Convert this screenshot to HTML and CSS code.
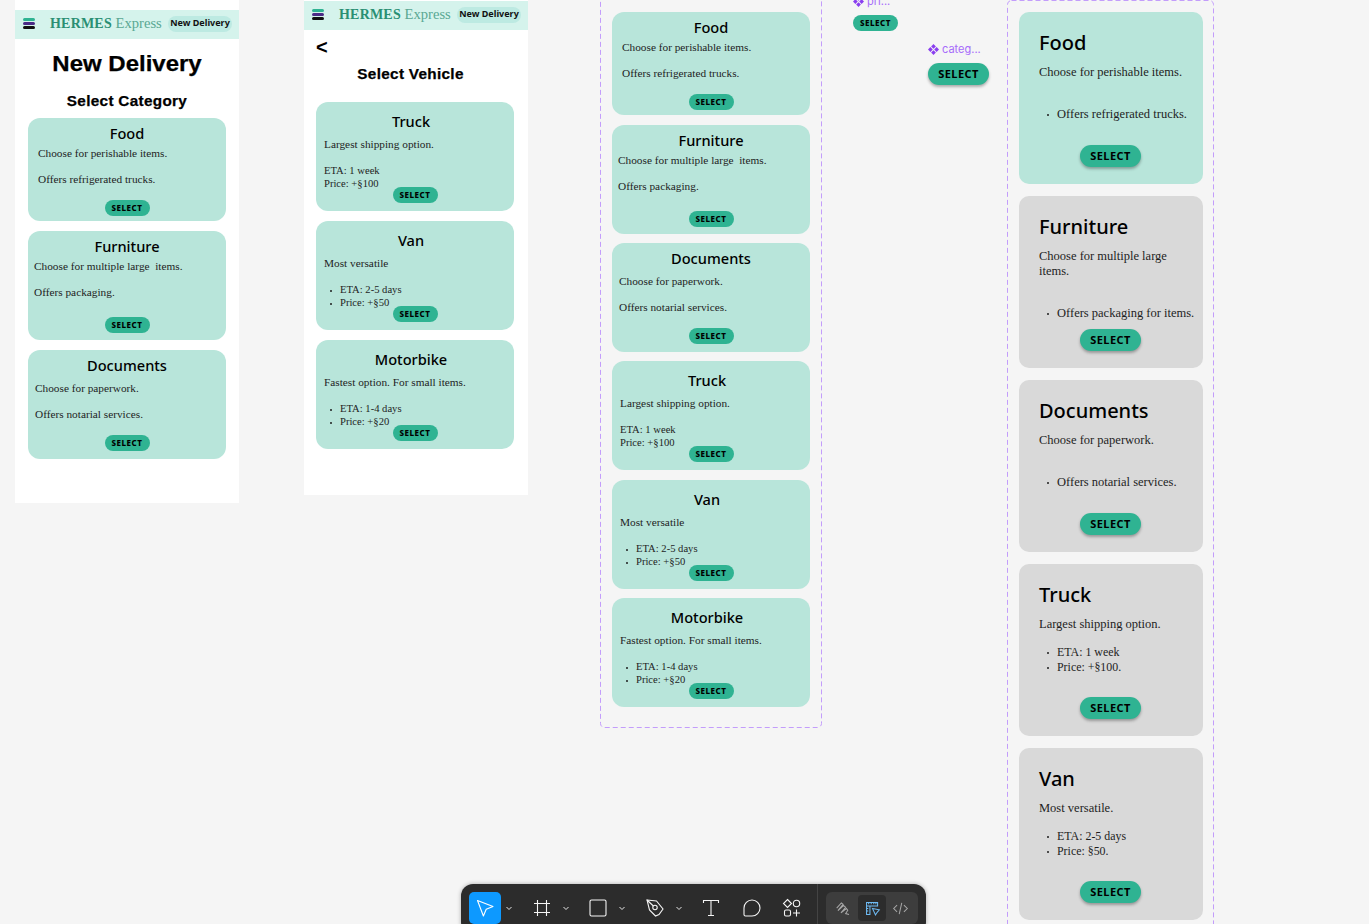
FILE: index.html
```html
<!DOCTYPE html>
<html lang="en">
<head>
    <meta charset="UTF-8">
    <title>Hermes Express - New Delivery</title>
    <link rel="stylesheet" href="styles.css">
</head>
<body>

<div id="canvas">

    <!-- category phone frame -->
    <div class="frame phone phone-category">
        <div class="app-header">
            <span class="burger"><i class="b1"></i><i class="b2"></i><i class="b3"></i></span>
            <span class="logo"><b>HERMES</b> Express</span>
            <span class="crumb">New Delivery</span>
        </div>
        <h1>New Delivery</h1>
        <h2>Select Category</h2>
        <div class="cards">
            <div class="card short">
                <h3>Food</h3>
                <p class="in-10">Choose for perishable items.</p>
                <p class="in-10">Offers refrigerated trucks.</p>
                <button class="select">SELECT</button>
            </div>
            <div class="card">
                <h3>Furniture</h3>
                <p class="in-6">Choose for multiple large &nbsp;items.</p>
                <p class="in-6">Offers packaging.</p>
                <button class="select">SELECT</button>
            </div>
            <div class="card docs">
                <h3>Documents</h3>
                <p class="in-7">Choose for paperwork.</p>
                <p class="in-7">Offers notarial services.</p>
                <button class="select">SELECT</button>
            </div>
        </div>
    </div>

    <!-- vehicle phone frame -->
    <div class="frame phone phone-vehicle">
        <div class="app-header">
            <span class="burger"><i class="b1"></i><i class="b2"></i><i class="b3"></i></span>
            <span class="logo"><b>HERMES</b> Express</span>
            <span class="crumb">New Delivery</span>
        </div>
        <div class="back">&lt;</div>
        <h2>Select Vehicle</h2>
        <div class="cards">
            <div class="card vehicle">
                <h3>Truck</h3>
                <p>Largest shipping option.</p>
                <p>ETA: 1 week<br>Price: +§100</p>
                <button class="select">SELECT</button>
            </div>
            <div class="card vehicle">
                <h3>Van</h3>
                <p>Most versatile</p>
                <ul><li>ETA: 2-5 days</li><li>Price: +§50</li></ul>
                <button class="select">SELECT</button>
            </div>
            <div class="card vehicle">
                <h3>Motorbike</h3>
                <p>Fastest option. For small items.</p>
                <ul><li>ETA: 1-4 days</li><li>Price: +§20</li></ul>
                <button class="select">SELECT</button>
            </div>
        </div>
    </div>

    <!-- component set, small -->
    <div class="frame set set-small">
        <svg class="dash" width="222" height="736"><rect x="0.5" y="0.5" width="221" height="735" rx="4"/></svg>
        <div class="card short">
            <h3>Food</h3>
            <p class="in-10">Choose for perishable items.</p>
            <p class="in-10">Offers refrigerated trucks.</p>
            <button class="select">SELECT</button>
        </div>
        <div class="card">
            <h3>Furniture</h3>
            <p class="in-6">Choose for multiple large &nbsp;items.</p>
            <p class="in-6">Offers packaging.</p>
            <button class="select">SELECT</button>
        </div>
        <div class="card docs">
            <h3>Documents</h3>
            <p class="in-7">Choose for paperwork.</p>
            <p class="in-7">Offers notarial services.</p>
            <button class="select">SELECT</button>
        </div>
        <div class="card vehicle">
            <h3>Truck</h3>
            <p>Largest shipping option.</p>
            <p>ETA: 1 week<br>Price: +§100</p>
            <button class="select">SELECT</button>
        </div>
        <div class="card vehicle">
            <h3>Van</h3>
            <p>Most versatile</p>
            <ul><li>ETA: 2-5 days</li><li>Price: +§50</li></ul>
            <button class="select">SELECT</button>
        </div>
        <div class="card vehicle">
            <h3>Motorbike</h3>
            <p>Fastest option. For small items.</p>
            <ul><li>ETA: 1-4 days</li><li>Price: +§20</li></ul>
            <button class="select">SELECT</button>
        </div>
    </div>

    <!-- loose components -->
    <div class="loose loose-pri">
        <span class="comp-label"><svg class="comp-icon" viewBox="0 0 12 12"><path d="M6 0 8.600 2.600 6 5.200 3.400 2.600ZM2.600 3.400 5.200 6 2.600 8.600 0 6ZM9.400 3.400 12 6 9.400 8.600 6.800 6ZM6 6.800 8.600 9.400 6 12 3.400 9.400Z"/></svg>pri...</span>
        <button class="select">SELECT</button>
    </div>
    <div class="loose loose-categ">
        <span class="comp-label"><svg class="comp-icon" viewBox="0 0 12 12"><path d="M6 0 8.600 2.600 6 5.200 3.400 2.600ZM2.600 3.400 5.200 6 2.600 8.600 0 6ZM9.400 3.400 12 6 9.400 8.600 6.800 6ZM6 6.800 8.600 9.400 6 12 3.400 9.400Z"/></svg>categ...</span>
        <button class="select big">SELECT</button>
    </div>

    <!-- component set, large -->
    <div class="frame set set-large">
        <svg class="dash" width="207" height="970"><rect x="0.5" y="0.5" width="206" height="969" rx="4"/></svg>
        <div class="bigcard teal">
            <h3>Food</h3>
            <p>Choose for perishable items.</p>
            <ul class="far"><li>Offers refrigerated trucks.</li></ul>
            <button class="select big">SELECT</button>
        </div>
        <div class="bigcard">
            <h3>Furniture</h3>
            <p>Choose for multiple large items.</p>
            <ul class="far"><li>Offers packaging for items.</li></ul>
            <button class="select big">SELECT</button>
        </div>
        <div class="bigcard">
            <h3>Documents</h3>
            <p>Choose for paperwork.</p>
            <ul class="far"><li>Offers notarial services.</li></ul>
            <button class="select big">SELECT</button>
        </div>
        <div class="bigcard">
            <h3>Truck</h3>
            <p>Largest shipping option.</p>
            <ul><li>ETA: 1 week</li><li>Price: +§100.</li></ul>
            <button class="select big">SELECT</button>
        </div>
        <div class="bigcard">
            <h3>Van</h3>
            <p>Most versatile.</p>
            <ul><li>ETA: 2-5 days</li><li>Price: §50.</li></ul>
            <button class="select big">SELECT</button>
        </div>
    </div>

    <!-- figma toolbar -->
    <div id="toolbar">
        <div class="tool-group">
            <span class="tool active">
                <svg viewBox="0 0 20 20"><path d="M2.500 2.500 18 8.400 11.200 11.200 8.400 18Z"/></svg>
            </span>
            <span class="chev"><svg viewBox="0 0 8 8"><path d="M1.500 3 4 5.500 6.500 3"/></svg></span>
        </div>
        <div class="tool-group">
            <span class="tool">
                <svg viewBox="0 0 20 20"><path d="M5.500 2V18M14.500 2V18M2 5.500H18M2 14.500H18"/></svg>
            </span>
            <span class="chev"><svg viewBox="0 0 8 8"><path d="M1.500 3 4 5.500 6.500 3"/></svg></span>
        </div>
        <div class="tool-group">
            <span class="tool">
                <svg viewBox="0 0 20 20"><rect x="2" y="2" width="16" height="16" rx="1.500"/></svg>
            </span>
            <span class="chev"><svg viewBox="0 0 8 8"><path d="M1.500 3 4 5.500 6.500 3"/></svg></span>
        </div>
        <div class="tool-group">
            <span class="tool">
                <svg viewBox="0 0 20 20"><path d="M2 2 11.500 3 18 11 14 16.500 10.500 18 4.500 12Z"/><circle cx="10" cy="9.500" r="2.200"/><path d="M2 2 8.400 8"/></svg>
            </span>
            <span class="chev"><svg viewBox="0 0 8 8"><path d="M1.500 3 4 5.500 6.500 3"/></svg></span>
        </div>
        <span class="tool">
            <svg viewBox="0 0 20 20"><path d="M2.500 5V2.500H17.500V5M10 2.500V17.500M7 17.500H13"/></svg>
        </span>
        <span class="tool">
            <svg viewBox="0 0 20 20"><path d="M10 2A8 8 0 1 1 10 18H3.500Q2 18 2 16.500V10A8 8 0 0 1 10 2Z"/></svg>
        </span>
        <span class="tool">
            <svg viewBox="0 0 20 20"><path d="M5.500 1.500 9.500 5.500 5.500 9.500 1.500 5.500Z"/><circle cx="14.500" cy="5.500" r="3.200"/><rect x="2.500" y="12" width="6" height="6" rx="1.500"/><path d="M14.500 11.500V18.500M11 15H18"/></svg>
        </span>
        <div class="tool-sep"></div>
        <div class="mode-group">
            <span class="mode">
                <svg viewBox="0 0 20 20"><path d="M2 9.500 7.500 3.500 9.500 5 3.500 12.500 10 6.500 12.500 8.500 7 15 13.500 10 15 12 12.500 16 16.500 17"/></svg>
            </span>
            <span class="mode on">
                <svg viewBox="0 0 20 20"><path d="M3 3H16V7H7V17H3ZM3 7H7M5.500 3V5M8.500 3V5M11.500 3V5M14 3V5M3 10H5M3 13H5"/><path d="M10 10 18 11.500 15.500 14.500 13.500 17.500Z"/></svg>
            </span>
            <span class="mode">
                <svg viewBox="0 0 20 20"><path d="M6 6 2 10 6 14M14 6 18 10 14 14M11.500 3.500 8.500 16.500"/></svg>
            </span>
        </div>
    </div>

</div>

</body>
</html>
```

FILE: styles.css
```css
* {
    box-sizing: border-box;
}
html, body {
    margin: 0;
    height: 100%;
    overflow: hidden;
}
body {
    background-color: #f5f5f5;
    font-family: "Liberation Serif", serif;
    color: #1e1e1e;
}
#canvas {
    position: relative;
    width: 1369px;
    height: 924px;
    overflow: hidden;
}

/* frames sit at free positions on the canvas */
.frame {
    position: absolute;
}
.phone {
    width: 224px;
    background: #fff;
}
.phone-category {
    left: 15px;
    top: 0;
    height: 503px;
    padding-top: 10px;
}
.phone-vehicle {
    left: 304px;
    top: 0;
    height: 495px;
    padding-top: 1px;
}
.set {
    display: flex;
    flex-direction: column;
}
.dash {
    position: absolute;
    left: 0;
    top: 0;
    pointer-events: none;
}
.dash rect {
    fill: none;
    stroke: #c39dfb;
    stroke-width: 1;
    stroke-dasharray: 5 3;
}
.set-small {
    left: 600px;
    top: -8px;
    width: 222px;
    height: 736px;
    padding: 20px 12px 0;
    gap: 9px;
}
.set-small .short, .set-small .vehicle:nth-of-type(4) {
    margin-bottom: 1px;
}
.set-large {
    left: 1007px;
    top: 0;
    width: 207px;
    height: 970px;
    padding: 12px 11px 0 12px;
    gap: 12px;
}

/* app header */
.app-header {
    height: 29px;
    background: #d5f3ec;
    display: flex;
    align-items: center;
    padding-left: 8px;
}
.burger {
    width: 12px;
    margin-top: -2px;
    display: flex;
    flex-direction: column;
    gap: 1px;
}
.burger i {
    display: block;
    height: 3px;
    border-radius: 2px;
}
.b1 { background: #2fb392; }
.b2 { background: #4b2a85; }
.b3 { background: #111; }
.logo {
    margin-left: 15px;
    margin-top: -3px;
    width: 112px;
    font-size: 14.6px;
    color: #5aa893;
    white-space: nowrap;
}
.logo b {
    font-size: 14px;
    color: #2a8f73;
    letter-spacing: 0.2px;
}
.crumb {
    margin-left: 6px;
    margin-top: -1px;
    width: 64px;
    height: 16px;
    border-radius: 8px;
    background: #bdeae2;
    font: 700 9px/14px "Noto Sans", sans-serif;
    color: #111;
    text-align: center;
    white-space: nowrap;
}

/* headings, the drawn font is wider than anything installed */
h1, h2 {
    margin: 0;
    font-family: "Liberation Sans", sans-serif;
    font-weight: 700;
    color: #000;
    text-align: center;
    white-space: nowrap;
    -webkit-text-stroke: 0.25px #000;
    transform: scaleX(1.09);
}
h1 {
    margin-top: 11px;
    font-size: 22px;
    line-height: 28px;
}
.phone h2 {
    font-size: 14px;
    line-height: 16px;
    letter-spacing: 0.3px;
}
.phone-category h2 {
    margin-top: 15px;
}
.phone-vehicle h2 {
    margin-top: 9px;
    padding-right: 10px;
}
.back {
    margin-top: 7px;
    padding-left: 12px;
    font: 700 20px/20px "Liberation Sans", sans-serif;
    color: #000;
}
.cards {
    display: flex;
    flex-direction: column;
    gap: 10px;
    padding-left: 13px;
}
.phone-category .cards {
    margin-top: 9px;
}
.phone-vehicle .cards {
    margin-top: 20px;
    padding-left: 12px;
}

/* small card */
.card {
    width: 198px;
    height: 109px;
    flex-shrink: 0;
    background: #b8e5da;
    border-radius: 12px;
    padding: 5px 0 7px;
    display: flex;
    flex-direction: column;
}
.card.short {
    height: 103px;
    padding-bottom: 5px;
}
.card.docs {
    padding-bottom: 8px;
}
.card h3 {
    margin: 0 0 4px;
    font: 500 14.6px/20px "Noto Sans", sans-serif;
    color: #000;
    text-align: center;
}
.card.docs h3 {
    margin-bottom: 7px;
}
.card.vehicle {
    padding-top: 9px;
    padding-bottom: 8px;
}
.card.vehicle h3 {
    margin-bottom: 7px;
    padding-right: 8px;
}
.card p, .card ul {
    margin: 0 0 13px;
    padding: 0;
    font-size: 11.3px;
    line-height: 13px;
    white-space: nowrap;
}
.card.vehicle p, .card.vehicle ul {
    margin-left: 8px;
}
.card.vehicle ul, .card.vehicle p:nth-of-type(2) {
    margin-bottom: -6px;
    font-size: 10.6px;
}
.in-10 { padding-left: 10px !important; }
.in-6 { padding-left: 6px !important; }
.in-7 { padding-left: 7px !important; }

.card ul, .bigcard ul {
    list-style: none;
}
.card li {
    padding-left: 16px;
}
li::before {
    content: "";
    display: inline-block;
    width: 2px;
    height: 2px;
    border-radius: 50%;
    background: #1e1e1e;
    vertical-align: middle;
    margin-left: -10px;
    margin-right: 8px;
}

/* buttons */
.select {
    display: block;
    width: 45px;
    height: 16px;
    flex-shrink: 0;
    align-self: center;
    margin-top: auto;
    padding: 0;
    border: none;
    border-radius: 8px;
    background: #2fb392;
    color: #000;
    font: 800 8px/16px "Noto Sans", sans-serif;
    letter-spacing: 0.5px;
}
.select.big {
    width: 61px;
    height: 22px;
    border-radius: 11px;
    font: 700 11px/22px "Noto Sans", sans-serif;
    letter-spacing: 0.4px;
    box-shadow: 0 2px 3px rgba(0, 0, 0, 0.3);
}

/* large card */
.bigcard {
    width: 184px;
    height: 172px;
    flex-shrink: 0;
    background: #d9d9d9;
    border-radius: 10px;
    padding: 16px 0 17px 20px;
    display: flex;
    flex-direction: column;
}
.bigcard.teal {
    background: #b8e5da;
}
.bigcard h3 {
    margin: 0 0 8px;
    font: 500 20px/29px "Noto Sans", sans-serif;
    color: #000;
}
.bigcard p, .bigcard ul {
    margin: 0;
    padding: 0;
    font-size: 12.5px;
    line-height: 15px;
}
.bigcard p {
    padding-right: 20px;
}
.bigcard ul {
    margin-top: 13px;
    font-size: 11.9px;
    white-space: nowrap;
}
.bigcard ul.far {
    margin-top: 27px;
    font-size: 12.5px;
}
.bigcard li {
    padding-left: 18px;
}
.bigcard .select {
    margin-left: -21px;
}

/* loose components */
.loose {
    position: absolute;
}
.loose-pri {
    left: 853px;
    top: -5px;
}
.loose-categ {
    left: 928px;
    top: 42px;
}
.comp-label {
    display: flex;
    align-items: center;
    gap: 3px;
    height: 14px;
    font: 400 11px/14px Inter, sans-serif;
    color: #a66bfb;
}
.loose-pri .comp-label {
    margin-bottom: 6px;
    position: relative;
    top: -1px;
}
.loose-categ .comp-label {
    margin-bottom: 7px;
}
.comp-icon {
    width: 11px;
    height: 11px;
    fill: #8a3ff0;
}

/* toolbar */
#toolbar {
    position: absolute;
    left: 461px;
    top: 884px;
    width: 465px;
    height: 50px;
    border-radius: 12px;
    background: #2c2c2c;
    box-shadow: 0 0 4px rgba(0, 0, 0, 0.3);
    padding: 8px 8px 0;
    display: flex;
    align-items: flex-start;
    gap: 8.6px;
}
.tool-group {
    display: flex;
}
.tool {
    width: 32px;
    height: 32px;
    border-radius: 5px;
    display: flex;
    align-items: center;
    justify-content: center;
}
.tool svg {
    width: 20px;
    height: 20px;
    fill: none;
    stroke: #f5f5f5;
    stroke-width: 1.1;
}
.tool.active {
    background: #0d99ff;
}
.tool.active svg {
    stroke: #fff;
    stroke-linejoin: round;
}
.chev {
    width: 16px;
    height: 32px;
    display: flex;
    align-items: center;
    justify-content: center;
}
.chev svg {
    width: 8px;
    height: 8px;
    fill: none;
    stroke: #e6e6e6;
    stroke-width: 1;
}
.tool-sep {
    width: 1px;
    height: 50px;
    margin-top: -8px;
    background: #444;
}
.mode-group {
    display: flex;
    width: 92px;
    height: 32px;
    padding: 3px;
    border-radius: 6px;
    background: #3d3d3d;
}
.mode {
    flex: 1;
    height: 26px;
    border-radius: 4px;
    display: flex;
    align-items: center;
    justify-content: center;
}
.mode svg {
    width: 17px;
    height: 17px;
    fill: none;
    stroke: #a8a8a8;
    stroke-width: 1.2;
}
.mode.on {
    background: #2c2c2c;
}
.mode.on svg {
    stroke: #6fbcf5;
}
```
